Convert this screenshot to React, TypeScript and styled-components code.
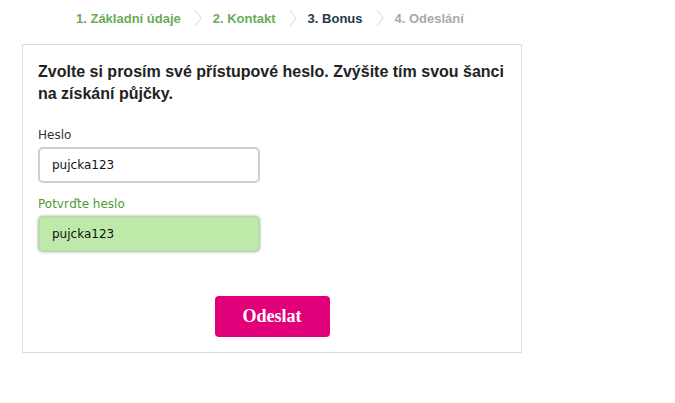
import React from "react";
import styled, { createGlobalStyle } from "styled-components";

const Global = createGlobalStyle`
  html, body { margin: 0; padding: 0; background: #fff; }
  body { font-family: Arial, "Liberation Sans", sans-serif; }
`;

const Page = styled.div`
  width: 675px;
  height: 403px;
  padding: 0 0 0 22px;
  box-sizing: border-box;
`;

const Steps = styled.nav`
  display: flex;
  align-items: center;
  height: 36px;
  padding-left: 54px;
  font-family: "Liberation Sans", Arial, sans-serif;
  font-weight: bold;
  font-size: 13px;
`;

const Step = styled.span<{ $state: "done" | "active" | "todo" }>`
  color: ${(p) => (p.$state === "done" ? "#6aab58" : p.$state === "active" ? "#23394d" : "#a9a9a9")};
`;

const Sep = styled.svg`
  width: 8px;
  height: 18px;
  margin: 0 11px 0 13px;
`;

const Card = styled.section`
  width: 500px;
  height: 309px;
  margin-top: 8px;
  box-sizing: border-box;
  border: 1px solid #dcdcdc;
  padding: 16px 15px 0 15px;
  display: flex;
  flex-direction: column;
`;

const Heading = styled.h1`
  margin: 0;
  font-family: "Liberation Sans", Arial, sans-serif;
  font-size: 16px;
  font-weight: bold;
  line-height: 22px;
  color: #222;
`;

const Field = styled.div`
  display: flex;
  flex-direction: column;
`;

const Label = styled.label<{ $ok?: boolean }>`
  font-family: "DejaVu Sans", Verdana, sans-serif;
  font-size: 12px;
  line-height: 12px;
  color: ${(p) => (p.$ok ? "#4f9a2f" : "#333")};
  margin-bottom: 6px;
`;

const Input = styled.div<{ $ok?: boolean }>`
  width: 222px;
  height: 36px;
  box-sizing: border-box;
  border: 2px solid ${(p) => (p.$ok ? "#bcd8b0" : "#cfcfcf")};
  border-radius: 5px;
  background: ${(p) => (p.$ok ? "#bdeaa8" : "#fff")};
  box-shadow: ${(p) => (p.$ok ? "0 0 3px rgba(90,120,80,0.55)" : "none")};
  display: flex;
  align-items: center;
  padding-left: 12px;
  font-family: "DejaVu Sans", Verdana, sans-serif;
  font-size: 12px;
  color: #111;
`;

const Fields = styled.div`
  display: flex;
  flex-direction: column;
  gap: 15px;
  margin-top: 24px;
`;

const Actions = styled.div`
  display: flex;
  justify-content: center;
  margin-top: 44px;
`;

const Button = styled.button`
  width: 115px;
  height: 41px;
  border: none;
  border-radius: 4px;
  background: #e2007a;
  color: #fff;
  font-family: "Liberation Serif", "Times New Roman", serif;
  font-weight: bold;
  font-size: 18px;
  cursor: pointer;
`;

const Chevron = () => (
  <Sep viewBox="0 0 8 18">
    <path d="M1 1 L7 9 L1 17" fill="none" stroke="#d8d8d8" strokeWidth="1" />
  </Sep>
);

export default function App() {
  return (
    <Page>
      <Global />
      <Steps>
        <Step $state="done">1. Základní údaje</Step>
        <Chevron />
        <Step $state="done">2. Kontakt</Step>
        <Chevron />
        <Step $state="active">3. Bonus</Step>
        <Chevron />
        <Step $state="todo">4. Odeslání</Step>
      </Steps>
      <Card>
        <Heading>
          Zvolte si prosím své přístupové heslo. Zvýšite tím svou šanci
          <br />
          na získání půjčky.
        </Heading>
        <Fields>
          <Field>
            <Label>Heslo</Label>
            <Input>pujcka123</Input>
          </Field>
          <Field>
            <Label $ok>Potvrďte heslo</Label>
            <Input $ok>pujcka123</Input>
          </Field>
        </Fields>
        <Actions>
          <Button>Odeslat</Button>
        </Actions>
      </Card>
    </Page>
  );
}
